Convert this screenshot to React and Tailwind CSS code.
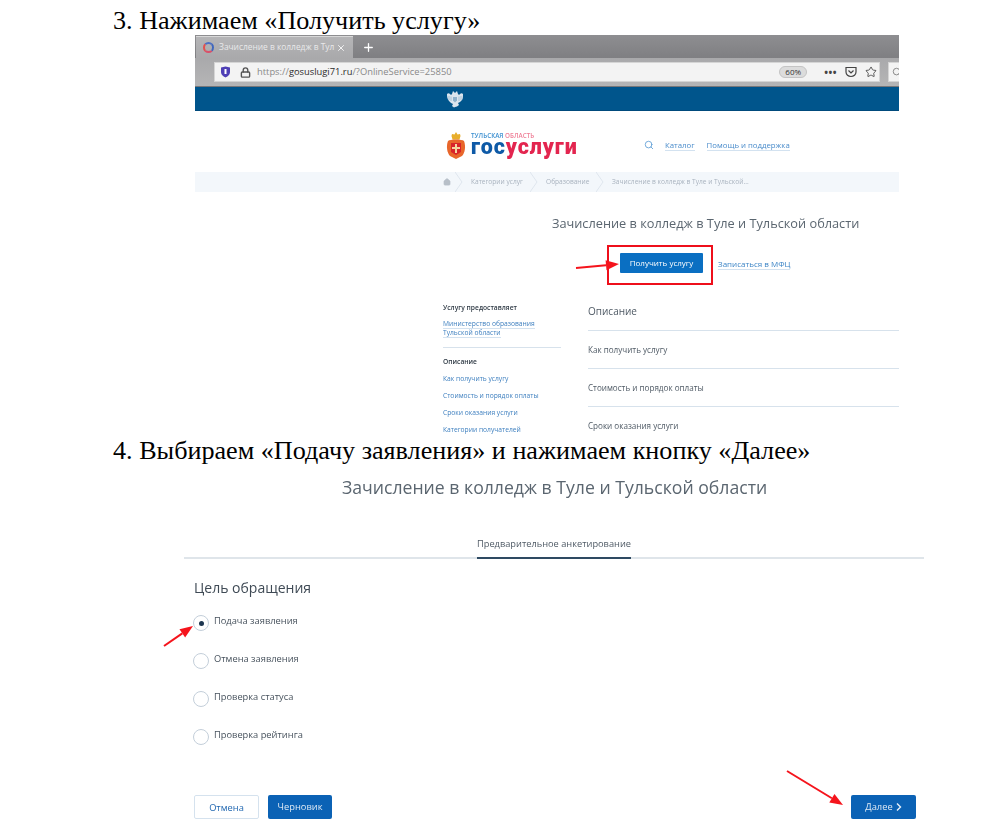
import { Home, Lock, Plus, Search, Star, X } from "lucide-react";

const sideLinks = [
  "Как получить услугу",
  "Стоимость и порядок оплаты",
  "Сроки оказания услуги",
  "Категории получателей",
];

const sections = ["Как получить услугу", "Стоимость и порядок оплаты", "Сроки оказания услуги"];

const purposes = ["Подача заявления", "Отмена заявления", "Проверка статуса", "Проверка рейтинга"];

const Crumb = ({ children, width }) => (
  <div className="flex items-center h-full">
    <svg width="8" height="20" viewBox="0 0 8 20" className="shrink-0">
      <path d="M0 0l7 10L0 20" fill="none" stroke="#dfe6ee" strokeWidth="1" />
    </svg>
    <span className={`ml-[8px] text-[6.600px] text-[#a9b3bf] leading-[10px] whitespace-nowrap ${width}`}>{children}</span>
  </div>
);

const Eagle = () => (
  <svg width="18" height="18" viewBox="0 0 18 18">
    <path d="M1 4c1-1 2-1 3 0l1 1 1-1 1-3 1 1 1 1 1-1 1-1 1 3 1 1 1-1c1-1 2-1 3 0 0 2 0 5-1 6l-2 2-2 1 1 2-2 1.500L9 17l-1 .5L6 16l1-2-2-1-2-2C1 9 1 6 1 4z" fill="#dbe5ee" />
    <path d="M7 7h4v3.500L9 12.500 7 10.500z" fill="#8fb2cc" />
    <path d="M3 6v4M5 6.500v4.500M15 6v4M13 6.500v4.500" stroke="#8fb2cc" strokeWidth="0.700" />
  </svg>
);

const Crest = () => (
  <svg width="20" height="27" viewBox="0 0 20 27">
    <path d="M10 0l1.500 2.500 2.500-.5.500 2-1 3.500H6.500l-1-3.500.5-2 2.500.5z" fill="#e8ae2c" />
    <path d="M2 9c2-2 14-2 16 0 2 5 1 12-2 15l-6 3-6-3C1 21 0 14 2 9z" fill="#e8662b" />
    <path d="M5 11h10v9l-5 3-5-3z" fill="#d8232a" />
    <path d="M9 12h2v3h3v2h-3v4H9v-4H6v-2h3z" fill="#f4d5a0" />
  </svg>
);

const Arrow = ({ x1, y1, x2, y2 }) => {
  // наконечник строим по направлению линии
  const a = Math.atan2(y2 - y1, x2 - x1);
  const len = 13;
  const wing = 5;
  const bx = x2 - len * Math.cos(a);
  const by = y2 - len * Math.sin(a);
  const nx = -Math.sin(a) * wing;
  const ny = Math.cos(a) * wing;
  return (
    <svg width="1008" height="833" className="absolute left-0 top-0 pointer-events-none">
      <line x1={x1} y1={y1} x2={bx} y2={by} stroke="#f5141c" strokeWidth="2" />
      <polygon points={`${x2},${y2} ${bx + nx},${by + ny} ${bx - nx},${by - ny}`} fill="#f5141c" />
    </svg>
  );
};

const BrowserShot = () => (
  <div className="ml-[195px] w-[704px] h-[400px] overflow-hidden font-['Open_Sans',sans-serif] blur-[0.35px]">
    <div className="h-[23px] flex items-end pl-[1px] bg-gradient-to-b from-[#8e8e91] to-[#7f7f82]">
      <div className="w-[157px] h-[22px] flex items-center px-[7px] bg-gradient-to-b from-[#b5b5b7] to-[#a9a9ab] border-t border-[#d8d8d8]">
        <span className="w-[11px] h-[11px] rounded-full border-2 border-l-[#e2504f] border-t-[#4c6fc4] border-r-[#3f66bd] border-b-[#d9506a] shrink-0" />
        <span className="ml-[5px] text-[8.400px] text-[#e9e9ea] whitespace-nowrap">Зачисление в колледж в Тул</span>
        <X size={10} className="text-white ml-auto shrink-0" />
      </div>
      <div className="w-[30px] h-[22px] flex items-center justify-center">
        <Plus size={13} strokeWidth={2.4} className="text-white" />
      </div>
    </div>
    <div className="h-[29px] bg-gradient-to-b from-[#a9a9ab] to-[#b5b5b6] border-b border-[#77777a] flex items-center pl-[19px]">
      <div className="w-[666px] h-[20px] shrink-0 bg-[#f3f3f3] border border-[#d5d5d5] flex items-center pl-[5px]">
        <svg width="11" height="12" viewBox="0 0 11 12" className="shrink-0">
          <path d="M1 1.500L5.500 0.500 10 1.500V6c0 3-2.500 4.500-4.500 5.500C3.500 10.500 1 9 1 6z" fill="#4e3fb5" />
          <path d="M5.500 3v5" stroke="#fff" strokeWidth="2" />
        </svg>
        <Lock size={11} strokeWidth={3} className="ml-[9px] text-[#555] shrink-0" />
        <span className="ml-[6px] mt-[1px] text-[9.350px] text-[#8a8a8a] whitespace-nowrap">
          https://<span className="text-[#2b2b2b]">gosuslugi71.ru</span>/?OnlineService=25850
        </span>
        <div className="ml-auto flex items-center pr-[2px]">
          <span className="w-[28px] h-[12px] rounded-full bg-[#dcdcdc] border border-[#c4c4c4] text-[8px] leading-[10px] text-center text-[#333]">
            60%
          </span>
          <span className="ml-[17px] text-[10px] font-bold leading-[10px] tracking-[0.5px] text-[#444]">•••</span>
          <svg width="12" height="12" viewBox="0 0 12 12" className="ml-[8px]">
            <path d="M1 1.500h10V6a5 4.500 0 0 1-10 0z" fill="none" stroke="#444" strokeWidth="1.200" />
            <path d="M3.500 4.500L6 7l2.500-2.500" fill="none" stroke="#444" strokeWidth="1.200" />
          </svg>
          <Star size={12} strokeWidth={1.6} className="ml-[8px] text-[#333]" />
        </div>
      </div>
      <div className="ml-[8px] w-[20px] h-[20px] shrink-0 bg-[#f3f3f3] border border-[#d5d5d5] flex items-center pl-[3px]">
        <Search size={10} className="text-[#777]" />
      </div>
    </div>
    <div className="h-[24px] bg-[#00558c] border-b border-[#004a7c] flex items-center pl-[251px]">
      <Eagle />
    </div>

    <div className="h-[61px] flex items-center pl-[251px] pt-[7px]">
      <Crest />
      <div className="ml-[5px] mt-[-4px] w-[110px]">
        <div className="text-[6.300px] leading-[7px] font-semibold whitespace-nowrap">
          <span className="text-[#3b8fd0]">ТУЛЬСКАЯ</span> <span className="text-[#ef7f97]">ОБЛАСТЬ</span>
        </div>
        <div className="font-['Roboto',sans-serif] text-[21.500px] leading-[16px] tracking-[0.9px] font-black whitespace-nowrap">
          <span className="text-[#0e5aa7]">гос</span>
          <span className="text-[#e3254f]">услуги</span>
        </div>
      </div>
      <Search size={10} className="ml-[63px] text-[#5a9bd5]" />
      <span className="ml-[11px] text-[7.800px] leading-[10px] text-[#4a8ccb] border-b border-[#d3e2f0]">Каталог</span>
      <span className="ml-[12px] text-[7.800px] leading-[10px] text-[#4a8ccb] border-b border-[#d3e2f0]">Помощь и поддержка</span>
    </div>

    <div className="h-[20px] bg-[#f3f7fb] flex items-center pl-[248px]">
      <Home size={8} fill="#b7bfc8" className="text-[#b7bfc8] mr-[4px]" />
      <Crumb width="w-[59px]">Категории услуг</Crumb>
      <Crumb width="w-[50px]">Образование</Crumb>
      <Crumb>Зачисление в колледж в Туле и Тульской...</Crumb>
    </div>

    <div className="h-[21px] mt-[21px] pl-[357px] text-[12.750px] leading-[21px] text-[#5b6670] whitespace-nowrap">
      Зачисление в колледж в Туле и Тульской области
    </div>

    <div className="flex items-center mt-[11px] ml-[412px]">
      <div className="w-[106px] h-[40px] border-2 border-[#ee0f1b] pt-[6px] pl-[11px]">
        <div className="w-[83px] h-[20px] bg-[#0a6fc2] text-white text-[8px] leading-[20px] text-center rounded-[1px]">
          Получить услугу
        </div>
      </div>
      <span className="ml-[5px] mt-[-2px] text-[8px] leading-[11px] text-[#3d85c6] border-b border-[#d3e2f0]">
        Записаться в МФЦ
      </span>
    </div>

    <div className="flex ml-[248px] mt-[18px]">
      <div className="w-[118px] text-[6.700px]">
        <div className="font-semibold text-[#2f3a45] leading-[10px]">Услугу предоставляет</div>
        <div className="mt-[6px] text-[#3d7fbf] leading-[9px]">
          <span className="border-b border-[#d3e2f0]">Министерство образования</span>
          <br />
          <span className="border-b border-[#d3e2f0]">Тульской области</span>
        </div>
        <div className="mt-[10px] border-t border-[#d7e2ec]" />
        <div className="mt-[9px] font-semibold text-[#2f3a45] leading-[10px]">Описание</div>
        <div className="mt-[7px] flex flex-col gap-[7px] text-[#3d7fbf] leading-[10px] whitespace-nowrap">
          {sideLinks.map((l) => (
            <span key={l}>{l}</span>
          ))}
        </div>
      </div>
      <div className="ml-[27px] flex-1 text-[#4f5a65]">
        <div className="h-[28px] border-b border-[#d7e2ec] text-[10px] leading-[16px]">Описание</div>
        {sections.map((s) => (
          <div key={s} className="h-[38px] border-b border-[#d7e2ec] text-[8.100px] leading-[38px] whitespace-nowrap">
            {s}
          </div>
        ))}
      </div>
    </div>
  </div>
);

const ApplicationForm = () => (
  <div className="font-['Open_Sans',sans-serif] blur-[0.25px]">
    <div className="pl-[342px] text-[17.650px] leading-[24px] text-[#5b6670] h-[24px] mt-[7px] whitespace-nowrap">
      Зачисление в колледж в Туле и Тульской области
    </div>
    <div className="ml-[184px] w-[740px] h-[53px] mt-[7px] border-b-2 border-[#dfe5ea] flex justify-center">
      <div className="h-[53px] pt-[31px] border-b-2 border-[#2e4a62] text-[9.250px] leading-[13px] text-[#4f5a65]">
        Предварительное анкетирование
      </div>
    </div>
    <div className="ml-[194px] mt-[20px] text-[14px] leading-[18px] text-[#3f4a55]">Цель обращения</div>
    <div className="ml-[193px] mt-[18px] flex flex-col gap-[22px]">
      {purposes.map((p, i) => (
        <div key={p} className="flex items-start h-[16px]">
          <span className="w-[16px] h-[16px] rounded-full border border-[#c3ced9] bg-white flex items-center justify-center shrink-0">
            {i === 0 && <span className="w-[5px] h-[5px] rounded-full bg-[#1d3650]" />}
          </span>
          <span className="ml-[5px] mt-[-1px] text-[9.300px] leading-[13px] text-[#46515c]">{p}</span>
        </div>
      ))}
    </div>
    <div className="ml-[194px] w-[722px] mt-[50px] flex text-[9.300px] leading-[24px]">
      <div className="w-[65px] h-[24px] border border-[#d5e2ee] rounded-[2px] text-center text-[#1f66b0]">Отмена</div>
      <div className="ml-[9px] w-[64px] h-[24px] bg-[#0b62b5] rounded-[2px] text-center text-[#dfeaf5]">Черновик</div>
      <div className="ml-auto w-[65px] h-[24px] bg-[#0b62b5] rounded-[2px] flex items-center justify-center gap-[3px] text-[#dfeaf5]">
        Далее
        <svg width="6" height="8" viewBox="0 0 6 8">
          <path d="M1 0.500L4.500 4 1 7.500" fill="none" stroke="#e6eff8" strokeWidth="1.400" />
        </svg>
      </div>
    </div>
  </div>
);

export default function App() {
  return (
    <div className="relative w-[1008px] h-[833px] overflow-hidden bg-white">
      <h2 className="h-[35px] pl-[113px] pt-[6px] font-['Liberation_Serif',serif] text-[26.150px] leading-[29px] text-black whitespace-nowrap">
        3. Нажимаем «Получить услугу»
      </h2>
      <BrowserShot />
      <h2 className="h-[33px] pl-[113px] pt-[1px] font-['Liberation_Serif',serif] text-[26.150px] leading-[29px] text-black whitespace-nowrap">
        4. Выбираем «Подачу заявления» и нажимаем кнопку «Далее»
      </h2>
      <ApplicationForm />
      <Arrow x1={576} y1={268} x2={619} y2={264} />
      <Arrow x1={164} y1={646} x2={193} y2={626} />
      <Arrow x1={787} y1={771} x2={843} y2={805} />
    </div>
  );
}
